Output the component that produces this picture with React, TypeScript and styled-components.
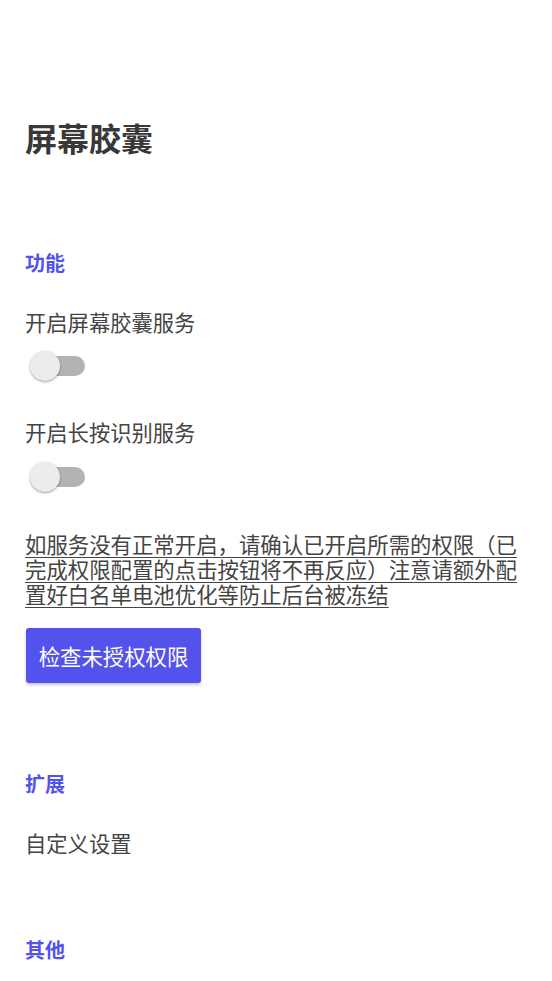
import React from "react";
import styled, { createGlobalStyle } from "styled-components";

const GlobalStyle = createGlobalStyle`
  html, body {
    margin: 0;
    padding: 0;
    background: #ffffff;
  }
  body {
    font-family: "Noto Sans CJK SC", "Noto Sans", Roboto, sans-serif;
  }
`;

const ACCENT = "#5352ed";
const TEXT = "#444444";

const Page = styled.div`
  width: 552px;
  min-height: 981px;
  box-sizing: border-box;
  padding: 0 25px;
  background: #ffffff;
  overflow: hidden;
`;

const Title = styled.h1`
  margin: 117px 0 0;
  font-size: 32px;
  line-height: 40px;
  font-weight: 700;
  color: #383838;
`;

const Section = styled.section<{ $gap: number }>`
  margin-top: ${(p) => p.$gap}px;
  display: flex;
  flex-direction: column;
  align-items: flex-start;
`;

const Category = styled.div`
  font-size: 20px;
  line-height: 28px;
  font-weight: 700;
  color: ${ACCENT};
`;

const ItemLabel = styled.div<{ $gap: number }>`
  margin-top: ${(p) => p.$gap}px;
  font-size: 21.3px;
  line-height: 28px;
  color: ${TEXT};
`;

const SwitchTrack = styled.div<{ $gap: number }>`
  margin-top: ${(p) => p.$gap}px;
  margin-left: 5px;
  position: relative;
  flex-shrink: 0;
  width: 55px;
  height: 30px;
  display: flex;
  align-items: center;
  &::before {
    content: "";
    display: block;
    flex-shrink: 0;
    margin-left: 5px;
    width: 50px;
    height: 20px;
    border-radius: 10px;
    background: #b3b3b3;
  }
`;

const SwitchThumb = styled.span`
  position: absolute;
  left: 0;
  top: 0;
  width: 30px;
  height: 30px;
  border-radius: 50%;
  background: #ececec;
  box-shadow: 0 1px 3px rgba(0, 0, 0, 0.28), 0 1px 1px rgba(0, 0, 0, 0.12);
`;

const Note = styled.p`
  margin: 39px 0 0;
  font-size: 21.4px;
  line-height: 25px;
  color: ${TEXT};
  text-decoration: underline;
  text-underline-offset: 4px;
  text-decoration-thickness: 1px;
`;

const ActionButton = styled.button`
  margin-top: 22px;
  margin-left: 1px;
  width: 175px;
  height: 55px;
  border: none;
  border-radius: 3px;
  background: ${ACCENT};
  color: #ffffff;
  font-family: "Noto Sans CJK SC", "Noto Sans", sans-serif;
  font-size: 21.4px;
  padding: 0;
  box-shadow: 0 2px 3px rgba(0, 0, 0, 0.22);
`;

const Switch: React.FC<{ gap: number }> = ({ gap }) => (
  <SwitchTrack $gap={gap} role="switch" aria-checked={false}>
    <SwitchThumb />
  </SwitchTrack>
);

export default function App() {
  return (
    <>
      <GlobalStyle />
      <Page>
        <Title>屏幕胶囊</Title>
        <Section $gap={92}>
          <Category>功能</Category>
          <ItemLabel $gap={31}>开启屏幕胶囊服务</ItemLabel>
          <Switch gap={15} />
          <ItemLabel $gap={37}>开启长按识别服务</ItemLabel>
          <Switch gap={16} />
          <Note>
            如服务没有正常开启，请确认已开启所需的权限（已完成权限配置的点击按钮将不再反应）注意请额外配置好白名单电池优化等防止后台被冻结
          </Note>
          <ActionButton>检查未授权权限</ActionButton>
        </Section>
        <Section $gap={87}>
          <Category>扩展</Category>
          <ItemLabel $gap={31}>自定义设置</ItemLabel>
        </Section>
        <Section $gap={79}>
          <Category>其他</Category>
        </Section>
      </Page>
    </>
  );
}
